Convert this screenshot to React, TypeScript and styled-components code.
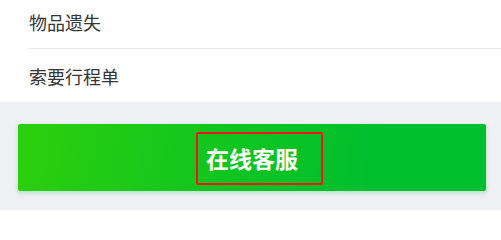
import React from "react";
import styled, { createGlobalStyle } from "styled-components";

const Global = createGlobalStyle`
  html, body { margin: 0; padding: 0; background: #ffffff; }
  body { font-family: "Noto Sans CJK SC", "Noto Sans", sans-serif; }
`;

const Page = styled.div`
  width: 501px;
  height: 210px;
  overflow: hidden;
  display: flex;
  flex-direction: column;
`;

const List = styled.div`
  background: #ffffff;
  margin-top: -5px;
  display: flex;
  flex-direction: column;
`;

const Row = styled.div<{ $divider?: boolean }>`
  height: 53px;
  margin-left: 28px;
  padding-left: 1px;
  display: flex;
  align-items: center;
  font-size: 18px;
  color: #363636;
  border-bottom: ${(p) => (p.$divider ? "1px solid #e8e8e8" : "none")};
`;

const Footer = styled.div`
  flex: 1;
  background: #eef0f3;
  padding: 22px 15px 0 18px;
`;

const Button = styled.div`
  height: 67px;
  border-radius: 2px;
  background: linear-gradient(100deg, #2ccf0c 0%, #12c61e 40%, #00bf2e 75%, #00bf2e 100%);
  box-shadow: 0 2px 4px rgba(0, 150, 40, 0.22);
  display: flex;
  align-items: center;
  justify-content: center;
`;

const Label = styled.span`
  margin-left: 15px;
  margin-top: 2px;
  padding: 10px 23px 10px 8px;
  border: 2px solid #f2141c;
  border-radius: 2px;
  color: #ffffff;
  font-size: 23px;
  font-weight: 700;
  line-height: 29px;
`;

export default function App() {
  return (
    <Page>
      <Global />
      <List>
        <Row $divider>物品遗失</Row>
        <Row>索要行程单</Row>
      </List>
      <Footer>
        <Button>
          <Label>在线客服</Label>
        </Button>
      </Footer>
    </Page>
  );
}
